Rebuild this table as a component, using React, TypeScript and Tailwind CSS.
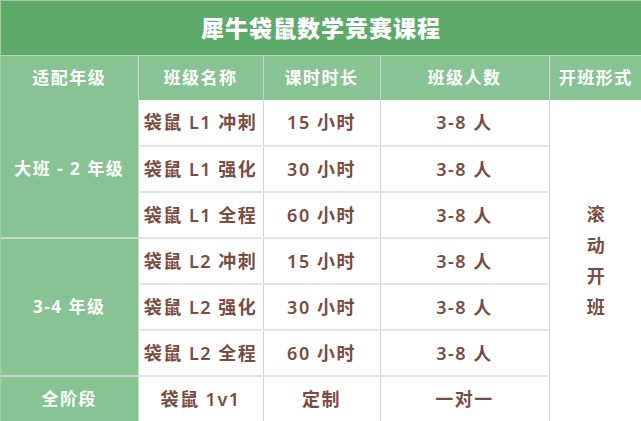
import * as React from "react"

const rows = [
  { name: "袋鼠 L1 冲刺", hours: "15 小时", size: "3-8 人" },
  { name: "袋鼠 L1 强化", hours: "30 小时", size: "3-8 人" },
  { name: "袋鼠 L1 全程", hours: "60 小时", size: "3-8 人" },
  { name: "袋鼠 L2 冲刺", hours: "15 小时", size: "3-8 人" },
  { name: "袋鼠 L2 强化", hours: "30 小时", size: "3-8 人" },
  { name: "袋鼠 L2 全程", hours: "60 小时", size: "3-8 人" },
]

const cell = "h-[46px] border-b-2 border-b-[#e3e3e8] border-r border-r-[#d2d2d8] text-center text-[18px] font-semibold tracking-[1.5px] text-[#7b4c40] p-0"
const head = "h-[44px] border-r border-r-[#c2d9c5] text-center text-[17px] font-bold tracking-[1.5px] text-white p-0"
const grade = "bg-[#88c393] border-b-2 border-b-[#c5dcc8] border-r border-r-[#c5dcc8] text-center text-[17px] font-bold tracking-[1.5px] text-white p-0"

export default function App() {
  return (
    <div
      className="w-[641px] h-[421px] overflow-hidden bg-white border-l border-t border-[#a9c9ad]"
      style={{ fontFamily: '"Noto Sans", "Noto Sans CJK SC", sans-serif' }}
    >
      <div className="h-[55px] bg-[#5eaa6a] border-b border-b-[#b7d6bb] flex items-center justify-center">
        <h1 className="text-[23px] font-black tracking-[1px] text-white">犀牛袋鼠数学竞赛课程</h1>
      </div>
      <table className="table-fixed border-collapse w-[641px]">
        <colgroup>
          <col className="w-[137px]" />
          <col className="w-[125px]" />
          <col className="w-[117px]" />
          <col className="w-[169px]" />
          <col className="w-[93px]" />
        </colgroup>
        <thead>
          <tr className="bg-[#88c393]">
            <th className={head}>适配年级</th>
            <th className={head}>班级名称</th>
            <th className={head}>课时时长</th>
            <th className={head}>班级人数</th>
            <th className={head + " border-r-0"}>开班形式</th>
          </tr>
        </thead>
        <tbody>
          {rows.map((r, i) => (
            <tr key={i}>
              {i === 0 && <td rowSpan={3} className={grade}>大班 - 2 年级</td>}
              {i === 3 && <td rowSpan={3} className={grade}>3-4 年级</td>}
              <td className={cell}>{r.name}</td>
              <td className={cell}>{r.hours}</td>
              <td className={cell}>{r.size}</td>
              {i === 0 && (
                <td rowSpan={7} className="align-middle text-center text-[18px] font-semibold text-[#7b4c40] p-0">
                  <div className="flex flex-col items-center leading-[31px]">
                    <span>滚</span>
                    <span>动</span>
                    <span>开</span>
                    <span>班</span>
                  </div>
                </td>
              )}
            </tr>
          ))}
          <tr>
            <td className={grade + " border-b-0"}>全阶段</td>
            <td className={cell + " border-b-0"}>袋鼠 1v1</td>
            <td className={cell + " border-b-0"}>定制</td>
            <td className={cell + " border-b-0"}>一对一</td>
          </tr>
        </tbody>
      </table>
    </div>
  )
}
